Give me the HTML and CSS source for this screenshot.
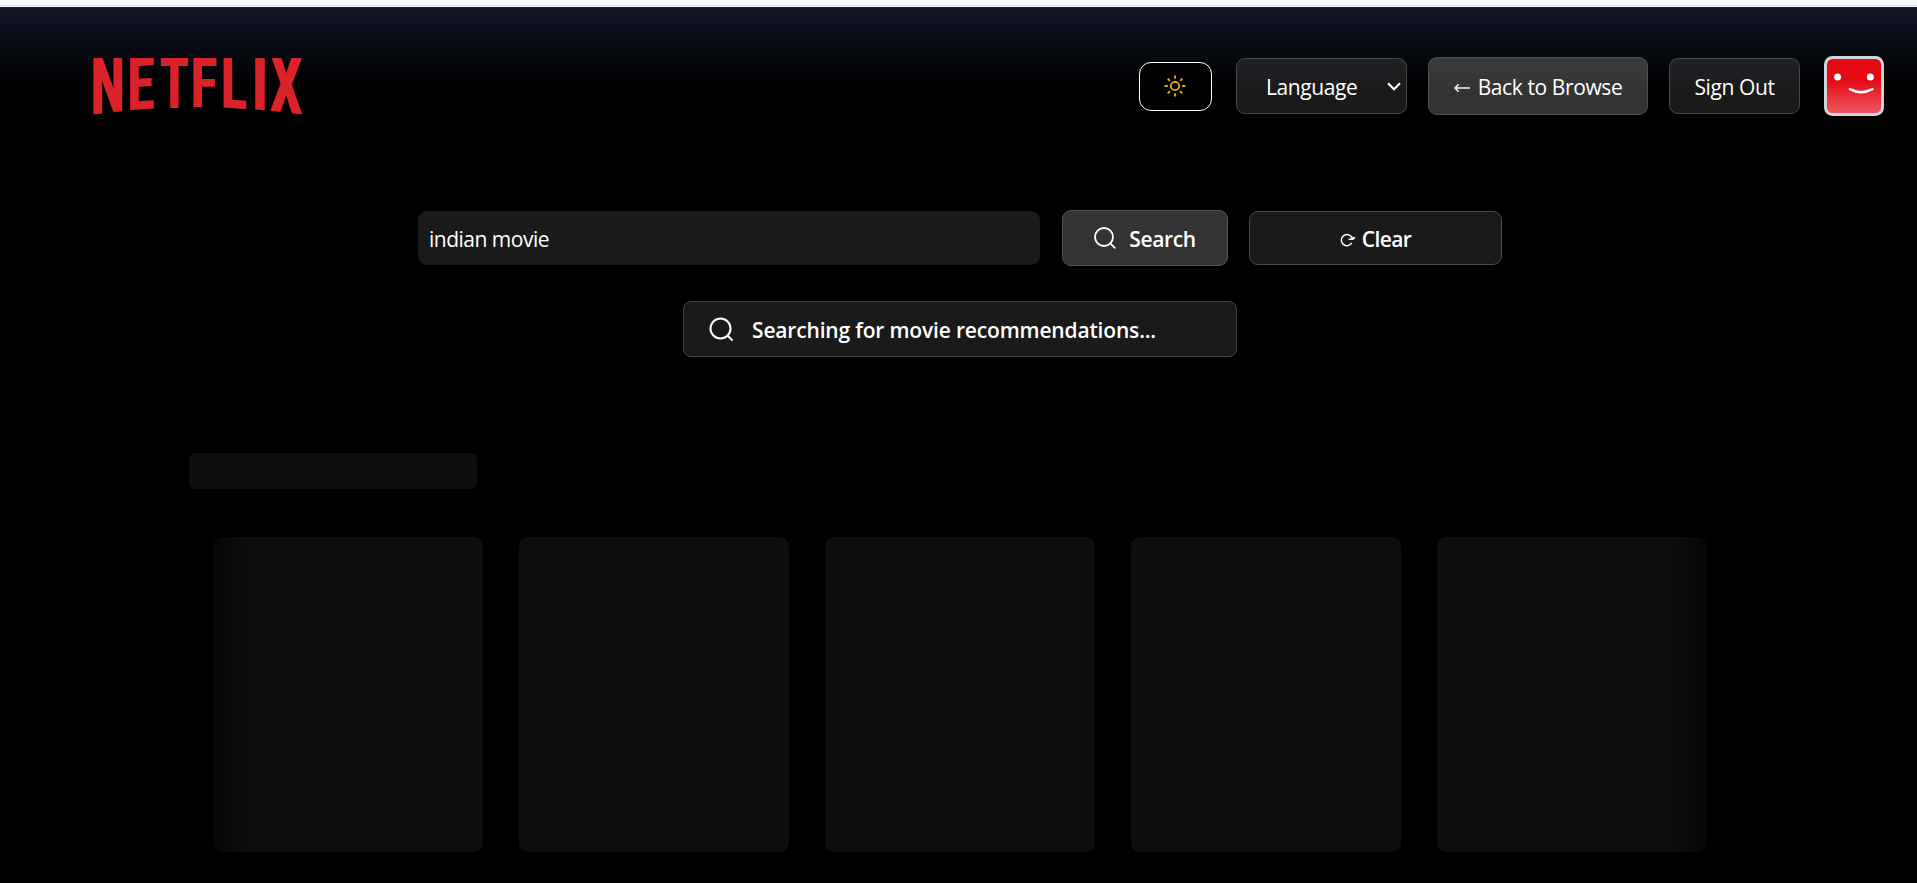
FILE: index.html
```html
<!DOCTYPE html>
<html lang="en">
<head>
<meta charset="utf-8">
<title>Netflix</title>
<link rel="stylesheet" href="styles.css">
</head>
<body>
<div class="topline"></div>
<header class="header">
  <svg class="logo" width="212" height="60" viewBox="0 0 212 60" role="img" aria-label="Netflix">
    <defs>
      <filter id="heavy" x="-5%" y="-5%" width="110%" height="110%"><feMorphology operator="dilate" radius="1 0"/></filter>
      <clipPath id="flat-top"><rect x="-4" y="1" width="220" height="62"/></clipPath>
    </defs>
    <g clip-path="url(#flat-top)">
      <g class="logo-word" filter="url(#heavy)">
        <text transform="matrix(.0226 -.0024 0 .0387 -1.4 57.6)">N</text>
        <text transform="matrix(.0222 -.0015 0 .0357 35.2 53.2)">E</text>
        <text transform="matrix(.0213 0 0 .0341 67.9 50.7)">T</text>
        <text transform="matrix(.0222 0 0 .0337 98.4 50)">F</text>
        <text transform="matrix(.0220 .0016 0 .0352 128.7 50.2)">L</text>
        <text transform="matrix(.0250 .0026 0 .0356 159.5 52.1)">I</text>
        <text transform="matrix(.0238 .0028 0 .0387 177.7 53.7)">X</text>
      </g>
    </g>
  </svg>
  <nav class="nav">
    <button class="theme" aria-label="Theme">
      <svg width="22" height="22" viewBox="0 0 22 22" fill="none" stroke="#eab308" stroke-width="1.8"><circle cx="11" cy="11" r="4.2"/><path d="M11 .6v3.2M11 18.2v3.2M.6 11h3.2M18.2 11h3.2M3.7 3.7l2.2 2.2M16.1 16.1l2.2 2.2M3.7 18.3l2.2-2.2M16.1 5.9l2.2-2.2"/></svg>
    </button>
    <button class="btn language"><span>Language</span>
      <svg width="14" height="9" viewBox="0 0 14 9" fill="none" stroke="#fff" stroke-width="2.2"><path d="M1 1.2l6 6 6-6"/></svg>
    </button>
    <button class="btn back"><svg width="16" height="10" viewBox="0 0 16 10" fill="none" stroke="#f4f4f4" stroke-width="1.5"><path d="M16 5H1M4.6 1.4L1 5l3.6 3.6"/></svg><span>Back to Browse</span></button>
    <button class="btn signout"><span>Sign Out</span></button>
    <svg class="avatar" width="60" height="60" viewBox="0 0 60 60">
      <defs><linearGradient id="face" x2="0" y2="1"><stop offset=".4" stop-color="#e50914"/><stop offset="1" stop-color="#ef5a63"/></linearGradient></defs>
      <rect x="1.5" y="1.5" width="57" height="57" rx="7" fill="url(#face)" stroke="#d1d5db" stroke-width="3"/>
      <circle cx="13.6" cy="21" r="3.5" fill="#fff"/><circle cx="46.3" cy="21" r="3.5" fill="#fff"/>
      <path d="M26 33.2q11 6 22.500 0" fill="none" stroke="#fff" stroke-width="2.600" stroke-linecap="round"/>
    </svg>
  </nav>
</header>
<main>
  <form class="search">
    <div class="field"><span>indian movie</span></div>
    <button type="button" class="btn go"><svg width="22" height="22" viewBox="0 0 22 22" fill="none" stroke="#fff" stroke-width="1.8" stroke-linecap="round"><circle cx="10" cy="10" r="9"/><path d="M16.3 16.3l4.500 4.500"/></svg><span>Search</span></button>
    <button type="button" class="btn clear"><svg width="16" height="14" viewBox="0 0 16 14" fill="none" stroke="#fff" stroke-width="1.5"><path d="M12.300 5.500A5.600 5.600 0 1 0 11.800 9.900M8.600 6.200H12.900L15 4.400M12.700 6.600V3.800"/></svg><span>Clear</span></button>
  </form>
  <div class="status"><svg width="25" height="25" viewBox="0 0 25 25" fill="none" stroke="#fff" stroke-width="2" stroke-linecap="round"><circle cx="11.500" cy="11.500" r="10"/><path d="M18.700 18.700l4.300 4.300"/></svg><span>Searching for movie recommendations...</span></div>
  <section class="results">
    <div class="title-skeleton"></div>
    <div class="row"><div class="card"></div><div class="card"></div><div class="card"></div><div class="card"></div><div class="card"></div></div>
  </section>
</main>
</body>
</html>
```
FILE: styles.css
```css
* { box-sizing: border-box; }
body { margin: 0; height: 883px; overflow: hidden; background: #000; color: #fff; font: 21px/28px "Open Sans", "Noto Sans", sans-serif; letter-spacing: -.4px; }
button { font: inherit; letter-spacing: inherit; color: inherit; margin: 0; padding: 0; }
span { white-space: nowrap; padding-top: 2px; }
.topline { height: 7px; background: linear-gradient(#f5fbf9 5px, #d5e2e2 5px, #d5e2e2 6px, #f5fbf9 6px); }
.header { height: 151px; padding: 49px 33px 0 93px; display: flex; justify-content: space-between; background: linear-gradient(#111827 0, #000 78px); }
.logo { margin-top: 1px; overflow: visible; }
.logo-word { font: 700 2048px Roboto, sans-serif; letter-spacing: 0; fill: #db202c; }
.nav { height: 60px; display: flex; align-items: center; }
.theme { width: 73px; height: 49px; margin-right: 24px; padding-right: 2px; display: flex; align-items: center; justify-content: center; background: #000; border: 1px solid #fff; border-radius: 12px; }
.btn { display: flex; align-items: center; justify-content: center; border: 1px solid #48494b; border-radius: 9px; background: #1a1a1a; }
.language { width: 171px; height: 56px; margin-right: 21px; padding: 0 5px 0 29px; justify-content: space-between; background: linear-gradient(#212226, #1a1a1a 60%); }
.back { width: 220px; height: 58px; margin-right: 21px; gap: 8px; border-color: #505153; background: linear-gradient(#3b3c40, #333 60%); }
.back svg { margin-top: 3px; }
.signout { width: 131px; height: 56px; margin-right: 24px; background: linear-gradient(#212226, #1a1a1a 60%); }
.search { height: 56px; margin: 52px 0 0 418px; display: flex; align-items: center; }
.field { width: 622px; height: 54px; padding: 0 11px; margin-right: 22px; display: flex; align-items: center; letter-spacing: -.5px; background: #1a1a1a; border-radius: 9px; }
.go { width: 166px; height: 56px; gap: 13px; margin-right: 21px; background: #333; border-color: #555; font-weight: 600; }
.clear { width: 253px; height: 54px; gap: 6px; font-weight: 600; letter-spacing: -.6px; }
.clear svg { margin-top: 4px; }
.status { width: 554px; height: 56px; margin: 35px 0 0 683px; padding-left: 25px; display: flex; align-items: center; gap: 18px; background: #1a1a1a; border: 1px solid #444; border-radius: 8px; font-weight: 600; letter-spacing: -.17px; }
.results { width: 1542px; margin: 96px 0 0 189px; }
.title-skeleton { width: 288px; height: 36px; background: #0e0e0e; border-radius: 6px; }
.row { position: relative; margin-top: 48px; padding: 0 24px; display: flex; gap: 36px; }
.row::before, .row::after { content: ""; position: absolute; top: 0; bottom: 0; width: 60px; }
.row::before { left: 0; background: linear-gradient(90deg, #000, transparent); }
.row::after { right: 0; background: linear-gradient(270deg, #000, transparent); }
.card { width: 270px; height: 315px; background: #0e0e0e; border-radius: 9px; }
```
